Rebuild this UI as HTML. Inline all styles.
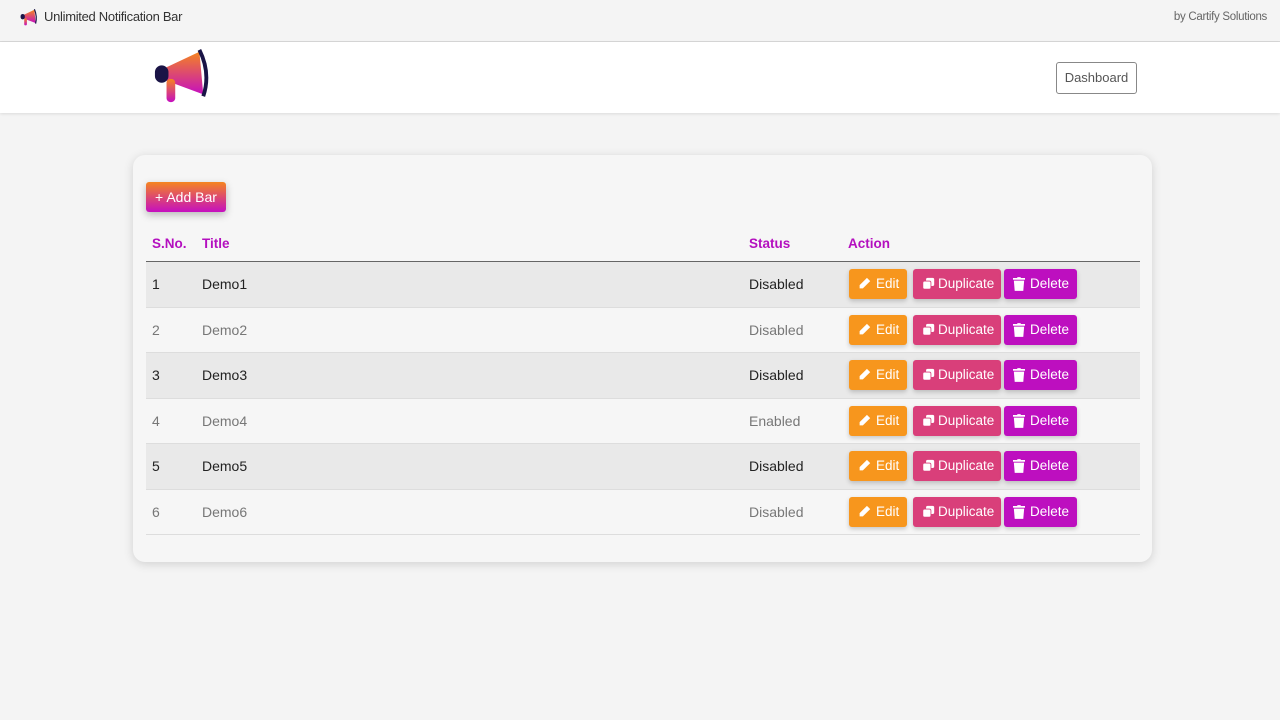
<!DOCTYPE html>
<html><head><style>
*{box-sizing:border-box;margin:0;padding:0}
body{width:1280px;height:720px;background:#f4f4f4;font-family:"Liberation Sans",sans-serif;position:relative;overflow:hidden}
.top{position:absolute;left:0;top:0;width:1280px;height:42px;background:#f4f4f4;border-bottom:1px solid #d8d8d8}
.top .t{position:absolute;left:44px;top:9px;font-size:13px;letter-spacing:-0.3px;color:#333}
.top .r{position:absolute;right:13px;top:11px;font-size:11.5px;letter-spacing:-0.3px;color:#666}
.hdr{position:absolute;left:0;top:42px;width:1280px;height:71px;background:#fff;box-shadow:0 1px 3px rgba(0,0,0,.1)}
.dash{position:absolute;left:1056px;top:20px;width:81px;height:32px;border:1px solid #888;border-radius:3px;font-size:13px;color:#555;text-align:center;line-height:30px}
.card{position:absolute;left:133px;top:155px;width:1019px;height:407px;background:#f6f6f6;border-radius:12px;box-shadow:0 2px 10px rgba(0,0,0,.15)}
.add{position:absolute;left:13px;top:27px;width:80px;height:30px;border-radius:3px;background:linear-gradient(#f5851f,#c50fc0);color:#fff;font-size:14px;line-height:30px;text-align:center;box-shadow:0 3px 8px rgba(0,0,0,.25)}
.th{position:absolute;top:81px;font-size:13.5px;font-weight:bold;color:#b40fbf}
.line{position:absolute;left:13px;top:106px;width:994px;height:2px;background:#666}
.row{position:absolute;left:13px;width:994px;height:45.5px;border-bottom:1px solid #ddd;font-size:14px}
.row span{position:absolute;top:14px}
.row.o{background:#e9e9e9;color:#222}
.row.e{background:#f6f6f6;color:#777}
.b{position:absolute;top:7px;height:30px;border-radius:3px;color:#fff;font-size:13.5px;line-height:30px;box-shadow:0 2px 5px rgba(0,0,0,.2)}
.b svg{position:absolute;top:8px}
.ed{left:703px;width:58px;background:#f7961d}
.du{left:767px;width:88px;background:#d93f7a}
.de{left:858px;width:73px;background:#bd0fbf}
</style></head><body>
<div class="top">
<svg style="position:absolute;left:19px;top:8px" width="20" height="18" viewBox="0 0 60 60"><defs><linearGradient id="g" x1="0" y1="0" x2="0" y2="1"><stop offset="0" stop-color="#f5851f"/><stop offset="1" stop-color="#c50fc0"/></linearGradient></defs><path d="M14 22 L48 6 L52 50 L14 36Z" fill="url(#g)"/><rect x="14" y="34" width="9" height="24" rx="4" fill="url(#g)"/><rect x="2" y="20" width="14" height="18" rx="7" fill="#1a1446"/><path d="M48 4 Q58 28 52 52" stroke="#1a1446" stroke-width="4" fill="none"/></svg>
<div class="t">Unlimited Notification Bar</div><div class="r">by Cartify Solutions</div></div>
<div class="hdr">
<svg style="position:absolute;left:153px;top:3px" width="58" height="60" viewBox="0 0 60 60"><path d="M14 22 L48 6 L52 50 L14 36Z" fill="url(#g)"/><rect x="14" y="34" width="9" height="24" rx="4" fill="url(#g)"/><rect x="2" y="20" width="14" height="18" rx="7" fill="#1a1446"/><path d="M48 4 Q60 28 52 52" stroke="#1a1446" stroke-width="4" fill="none"/></svg>
<div class="dash">Dashboard</div></div>
<div class="card">
<div class="add">+ Add Bar</div>
<div class="th" style="left:19px">S.No.</div><div class="th" style="left:69px">Title</div><div class="th" style="left:616px">Status</div><div class="th" style="left:715px">Action</div>
<div class="line"></div>
<div id="rows"></div>
</div>
<script>
var st=["Disabled","Disabled","Disabled","Enabled","Disabled","Disabled"],h="";
var pen='<svg style="left:9px" width="13" height="13" viewBox="0 0 16 16"><path d="M11 1l4 4-9 9H2v-4z" fill="#fff"/></svg>';
var dup='<svg style="left:9px" width="13" height="13" viewBox="0 0 16 16"><rect x="5" y="1" width="10" height="10" rx="2" fill="#fff"/><rect x="1" y="5" width="10" height="10" rx="2" fill="#fff" stroke="#d93f7a" stroke-width="1"/></svg>';
var tr='<svg style="left:9px" width="12" height="14" viewBox="0 0 14 16"><rect x="0" y="1" width="14" height="2" fill="#fff"/><rect x="5" y="0" width="4" height="2" fill="#fff"/><path d="M1 4h12l-1 12H2z" fill="#fff"/></svg>';
for(var i=0;i<6;i++){h+='<div class="row '+(i%2?'e':'o')+'" style="top:'+(107+i*45.5)+'px"><span style="left:6px">'+(i+1)+'</span><span style="left:56px">Demo'+(i+1)+'</span><span style="left:603px">'+st[i]+'</span><div class="b ed">'+pen+'<span style="left:27px;top:0">Edit</span></div><div class="b du">'+dup+'<span style="left:25px;top:0">Duplicate</span></div><div class="b de">'+tr+'<span style="left:26px;top:0">Delete</span></div></div>';}
document.getElementById('rows').innerHTML=h;
</script>
</body></html>
